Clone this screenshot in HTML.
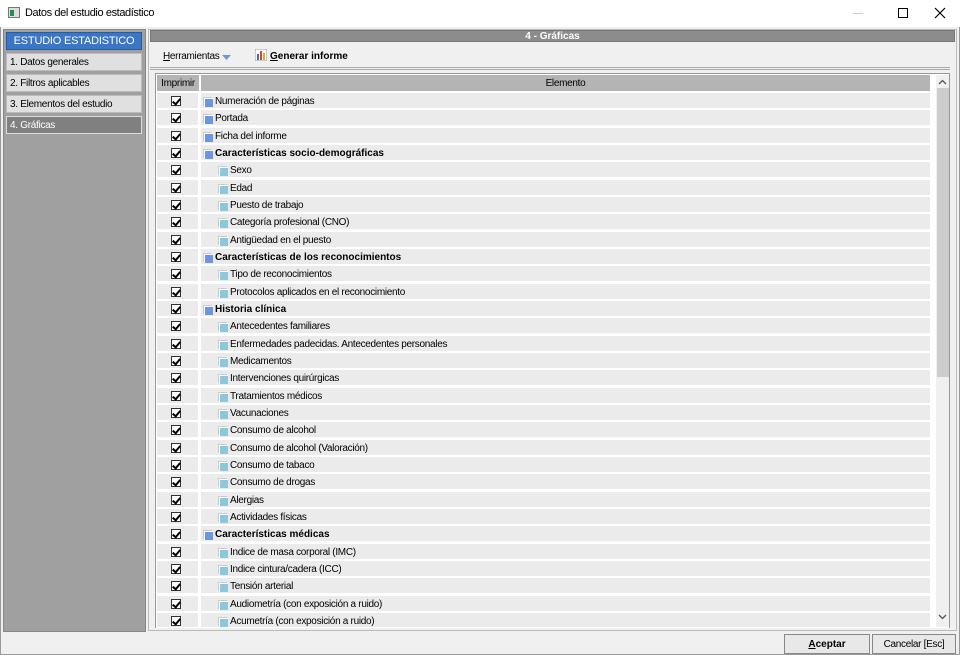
<!DOCTYPE html>
<html><head><meta charset="utf-8"><style>
*{margin:0;padding:0;box-sizing:border-box}
body{width:960px;height:655px;background:#f0f0f0;font-family:"Liberation Sans",sans-serif;font-size:10px;color:#000;position:relative;overflow:hidden}
.a{position:absolute}
.t{letter-spacing:-0.3px}
.row{position:absolute;left:157px;width:773px;height:15px}
.c1{position:absolute;left:0;width:41px;height:15px;background:#ebebeb}
.c2{position:absolute;left:44px;width:729px;height:15px;background:#ebebeb;white-space:nowrap}
.cb{position:absolute;left:14px;top:3px;width:10px;height:10px;border:1px solid #333;background:#fff}
.cb:after{content:"";position:absolute;left:2px;top:0px;width:3px;height:6px;border-right:2px solid #000;border-bottom:2px solid #000;transform:rotate(40deg)}
.ic{position:absolute;top:5px;width:9px;height:9px;background:#6d95e0;border-top:1px solid #fff;border-left:1px solid #fff;box-shadow:-1px -1px 0 #ccc}
.ic2{background:#8cc8dc}
.tx{position:absolute;top:3px}
.b{font-weight:bold;letter-spacing:0}
</style></head><body>
<div class="a" style="left:0;top:0;width:960px;height:27px;background:#fff"></div>
<div class="a" style="left:8px;top:7px;width:12px;height:11px;border:1px solid #777;background:#ddd"><div style="position:absolute;left:1px;top:2px;width:4px;height:6px;background:#2a8a4a"></div></div>
<div class="a" style="left:25px;top:7px;font-size:11px;letter-spacing:-0.4px">Datos del estudio estadístico</div>
<div class="a" style="left:853px;top:13px;width:10px;height:1px;background:#ccc"></div>
<div class="a" style="left:898px;top:8px;width:10px;height:10px;border:1px solid #000"></div>
<svg class="a" style="left:934px;top:7px" width="12" height="12"><path d="M1 1L11 11M11 1L1 11" stroke="#000" stroke-width="1.2"/></svg>
<div class="a" style="left:0;top:27px;width:1px;height:628px;background:#999"></div>
<div class="a" style="left:959px;top:27px;width:1px;height:628px;background:#999"></div>
<div class="a" style="left:0;top:654px;width:960px;height:1px;background:#999"></div>
<!-- left panel -->
<div class="a" style="left:3px;top:29px;width:143px;height:603px;background:#a0a0a0;border:1px solid #888"></div>
<div class="a" style="left:6px;top:32px;width:136px;height:18px;background:#3b75c5;border:1px solid #2a5aa0;color:#fff;font-size:11px;letter-spacing:-0.2px;text-align:center;line-height:17px;white-space:nowrap">ESTUDIO ESTADISTICO</div>
<div class="a t" style="left:6px;top:53px;width:136px;height:18px;background:#e0e0e0;border:1px solid #bbb;padding-left:3px;line-height:18px">1. Datos generales</div>
<div class="a t" style="left:6px;top:74px;width:136px;height:18px;background:#e0e0e0;border:1px solid #bbb;padding-left:3px;line-height:18px">2. Filtros aplicables</div>
<div class="a t" style="left:6px;top:95px;width:136px;height:18px;background:#e0e0e0;border:1px solid #bbb;padding-left:3px;line-height:18px">3. Elementos del estudio</div>
<div class="a t" style="left:6px;top:116px;width:136px;height:18px;background:#808080;border:1px solid #ddd;color:#fff;padding-left:3px;line-height:18px">4. Gráficas</div>
<!-- main -->
<div class="a" style="left:148px;top:29px;width:809px;height:602px;border:1px solid #bbb"></div>
<div class="a" style="left:150px;top:30px;width:805px;height:12px;background:#8c8c8c;border:1px solid #777;color:#fff;font-weight:bold;text-align:center;line-height:11px;font-size:10px">4 - Gráficas</div>
<div class="a t" style="left:163px;top:51px"><u>H</u>erramientas</div>
<svg class="a" style="left:222px;top:55px" width="9" height="6"><path d="M0 0H9L4.5 5Z" fill="#6a9ad8"/></svg>
<svg class="a" style="left:255px;top:49px" width="12" height="12"><rect x="0" y="0" width="12" height="12" fill="#fff" stroke="#99a"/><rect x="2" y="5" width="2" height="6" fill="#3a6ad0"/><rect x="5" y="2" width="2" height="9" fill="#e04040"/><rect x="8" y="4" width="2" height="7" fill="#e0b020"/></svg>
<div class="a" style="left:270px;top:51px;font-weight:bold"><u>G</u>enerar informe</div>
<div class="a" style="left:150px;top:67px;width:800px;height:3px;border-top:1px solid #aaa;border-bottom:1px solid #aaa"></div>
<!-- grid -->
<div class="a" style="left:155px;top:73px;width:795px;height:555px;background:#fff;border:1px solid #999;border-bottom:none"></div>
<div class="a t" style="left:157px;top:75px;width:42px;height:16px;background:#b4b4b4;text-align:center;line-height:18px">Imprimir</div>
<div class="a t" style="left:201px;top:75px;width:729px;height:16px;background:#b4b4b4;text-align:center;line-height:18px">Elemento</div>
<div class="a" style="left:936px;top:75px;width:13px;height:552px;background:#f0f0f0"></div>
<div class="a" style="left:937px;top:88px;width:12px;height:289px;background:#cdcdcd"></div>
<svg class="a" style="left:938px;top:79px" width="9" height="6"><path d="M1 5L4.5 1.5L8 5" stroke="#555" fill="none" stroke-width="1.3"/></svg>
<svg class="a" style="left:938px;top:614px" width="9" height="6"><path d="M1 1L4.5 4.5L8 1" stroke="#555" fill="none" stroke-width="1.3"/></svg>
<div class="a" style="left:156px;top:93px;width:778px;height:534px;overflow:hidden">
<div id="rows" style="position:relative;left:-156px;top:-93px"></div>
</div>
<script>
var d=[[1,"Numeración de páginas"],[1,"Portada"],[1,"Ficha del informe"],[0,"Características socio-demográficas"],[2,"Sexo"],[2,"Edad"],[2,"Puesto de trabajo"],[2,"Categoría profesional (CNO)"],[2,"Antigüedad en el puesto"],[0,"Características de los reconocimientos"],[2,"Tipo de reconocimientos"],[2,"Protocolos aplicados en el reconocimiento"],[0,"Historia clínica"],[2,"Antecedentes familiares"],[2,"Enfermedades padecidas. Antecedentes personales"],[2,"Medicamentos"],[2,"Intervenciones quirúrgicas"],[2,"Tratamientos médicos"],[2,"Vacunaciones"],[2,"Consumo de alcohol"],[2,"Consumo de alcohol (Valoración)"],[2,"Consumo de tabaco"],[2,"Consumo de drogas"],[2,"Alergias"],[2,"Actividades físicas"],[0,"Características médicas"],[2,"Indice de masa corporal (IMC)"],[2,"Indice cintura/cadera (ICC)"],[2,"Tensión arterial"],[2,"Audiometría (con exposición a ruido)"],[2,"Acumetría (con exposición a ruido)"]];
var h="";
d.forEach(function(r,i){var top=(93+i*17.33).toFixed(2);var lv=r[0];var x=lv==2?18:3;
h+='<div class="row" style="top:'+top+'px"><div class="c1"><div class="cb"></div></div><div class="c2"><div class="ic'+(lv==2?' ic2':'')+'" style="left:'+x+'px"></div><div class="tx t'+(lv==0?' b':'')+'" style="left:'+(x+11)+'px">'+r[1]+'</div></div></div>';});
document.getElementById("rows").innerHTML=h;
</script>
<!-- buttons -->
<div class="a" style="left:784px;top:634px;width:86px;height:20px;border:1px solid #888;background:#e8e8e8;text-align:center;line-height:19px;font-weight:bold"><u>A</u>ceptar</div>
<div class="a t" style="left:872px;top:634px;width:84px;height:20px;border:1px solid #888;background:#e8e8e8;text-align:center;line-height:19px">Cancelar [Esc]</div>
</body></html>
